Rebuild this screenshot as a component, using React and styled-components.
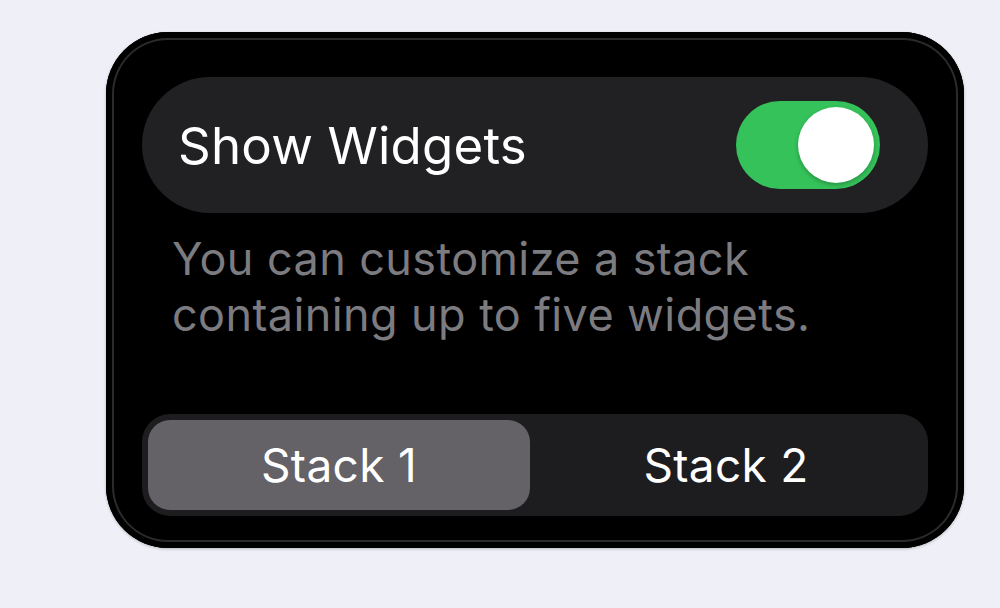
import React, { useState } from 'react'
import styled, { createGlobalStyle } from 'styled-components'

const Global = createGlobalStyle`
  html, body {
    margin: 0;
    padding: 0;
    background: #efeff7;
    font-family: Inter, "Noto Sans", sans-serif;
    -webkit-font-smoothing: antialiased;
  }
`

const Page = styled.div`
  width: 1000px;
  height: 608px;
  display: flex;
  align-items: flex-start;
  padding: 32px 0 0 106px;
  box-sizing: border-box;
`

const Card = styled.div`
  width: 858px;
  height: 516px;
  box-sizing: border-box;
  background: #000;
  border-radius: 62px;
  padding: 45px 36px 32px 36px;
  display: flex;
  flex-direction: column;
  box-shadow: inset 0 0 0 6px #000, inset 0 0 0 8px #2b2b2e, 0 1px 3px rgba(0,0,0,0.25);
`

const Row = styled.div`
  height: 136px;
  border-radius: 68px;
  background: #212124;
  display: flex;
  align-items: center;
  justify-content: space-between;
  padding: 0 48px 0 36px;
`

const Label = styled.span`
  color: #fff;
  font-size: 51px;
  font-weight: 400;
  letter-spacing: 0.2px;
`

const Toggle = styled.button`
  width: 144px;
  height: 88px;
  border: none;
  border-radius: 44px;
  background: ${p => (p.on ? '#35c25a' : '#39393d')};
  padding: 6px;
  display: flex;
  justify-content: ${p => (p.on ? 'flex-end' : 'flex-start')};
  cursor: pointer;
  box-sizing: border-box;
`

const Knob = styled.span`
  width: 76px;
  height: 76px;
  border-radius: 50%;
  background: #fff;
  box-shadow: 0 2px 4px rgba(0,0,0,0.25);
`

const Hint = styled.p`
  margin: 18px 0 0 0;
  padding-left: 30px;
  color: #7c7c80;
  font-size: 45px;
  line-height: 56px;
  letter-spacing: 0.4px;
`

const Segmented = styled.div`
  margin-top: auto;
  height: 102px;
  border-radius: 28px;
  background: #1d1d20;
  padding: 6px;
  box-sizing: border-box;
  display: grid;
  grid-template-columns: 382px 1fr;
`

const Segment = styled.button`
  border: none;
  border-radius: 22px;
  background: ${p => (p.active ? '#646167' : 'transparent')};
  color: #fff;
  font-family: inherit;
  font-size: 46px;
  font-weight: 400;
  letter-spacing: 0.3px;
  cursor: pointer;
`

export default function App() {
  const [on, setOn] = useState(true)
  const [stack, setStack] = useState(0)
  return (
    <>
      <Global />
      <Page>
        <Card>
          <Row>
            <Label>Show Widgets</Label>
            <Toggle on={on} onClick={() => setOn(!on)}>
              <Knob />
            </Toggle>
          </Row>
          <Hint>
            You can customize a stack
            <br />
            containing up to five widgets.
          </Hint>
          <Segmented>
            {['Stack 1', 'Stack 2'].map((s, i) => (
              <Segment key={s} active={stack === i} onClick={() => setStack(i)}>
                {s}
              </Segment>
            ))}
          </Segmented>
        </Card>
      </Page>
    </>
  )
}
